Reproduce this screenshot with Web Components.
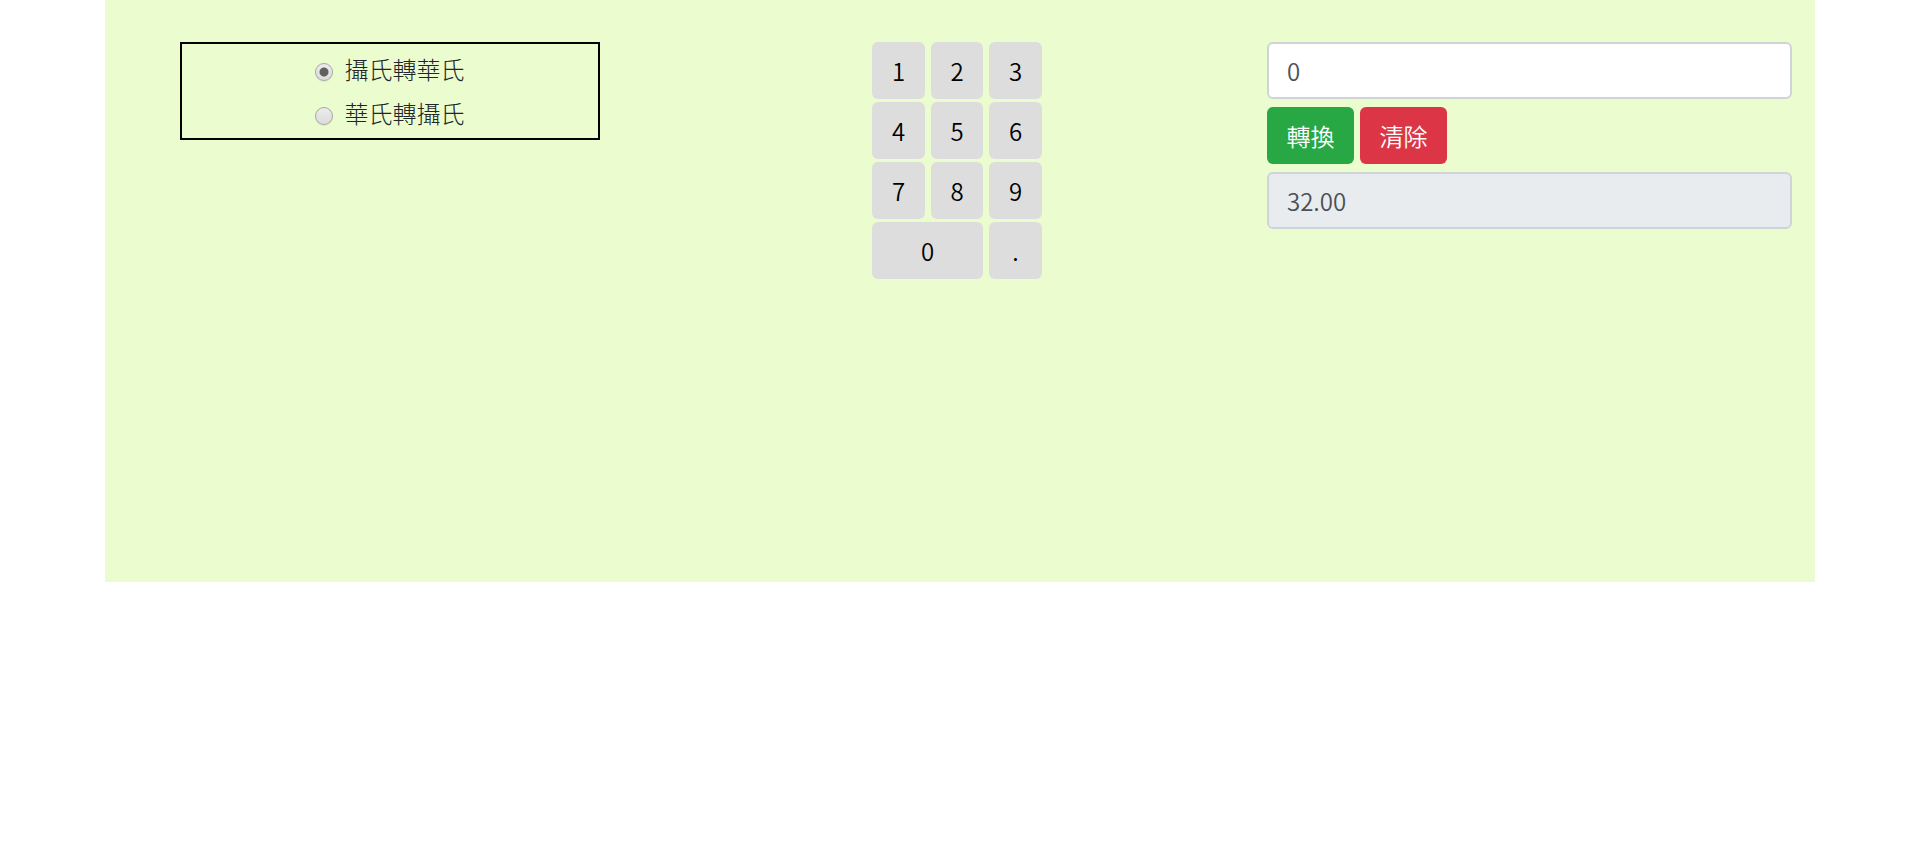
<!DOCTYPE html>
<html lang="zh-Hant">
<head>
<meta charset="utf-8">
<meta name="viewport" content="width=device-width, initial-scale=1">
<title>溫度轉換</title>
<style>
body {
  margin: 0;
  background: #fff;
  color: #212529;
  font-family: "Noto Sans CJK TC", "Noto Sans", sans-serif;
  font-size: 24px;
  font-weight: 300;
  line-height: 36px;
}
</style>
</head>
<body>
<temperature-converter></temperature-converter>

<script>
class ModePicker extends HTMLElement {
  constructor() {
    super();
    this.attachShadow({ mode: "open" }).innerHTML = `
      <style>
        :host { display: block; width: 80%; max-width: 420px; box-sizing: border-box; }
        fieldset {
          display: flex; flex-direction: column; align-items: center; gap: 8px;
          margin: 0; padding: 7px 0; border: 2px solid #000; min-width: 0;
        }
        label { display: flex; align-items: center; gap: 12px; }
        input {
          appearance: none; box-sizing: border-box; flex: none;
          width: 18px; height: 18px; margin: 6px 0 0;
          border: 1px solid #a8a8a8; border-radius: 50%;
          background: linear-gradient(#ececec, #dcdcdc);
          box-shadow: 0 1px 1px #00000014;
        }
        input:checked {
          background: radial-gradient(circle, #606060 0 4px, transparent 5px), linear-gradient(#ececec, #dcdcdc);
        }
      </style>
      <fieldset aria-label="轉換方向">
        <label><input type="radio" name="mode" value="cf" checked>攝氏轉華氏</label>
        <label><input type="radio" name="mode" value="fc">華氏轉攝氏</label>
      </fieldset>`;
  }
  get value() {
    return this.shadowRoot.querySelector("input:checked").value;
  }
}
customElements.define("mode-picker", ModePicker);

class NumberPad extends HTMLElement {
  constructor() {
    super();
    const keys = ["1", "2", "3", "4", "5", "6", "7", "8", "9", "0", "."];
    this.attachShadow({ mode: "open" }).innerHTML = `
      <style>
        :host { display: grid; grid-template-columns: 53px 52px 53px; gap: 3px 6px; }
        button {
          height: 57px; padding: 0; border: 0; border-radius: 6px;
          background: #ddd; color: #000; font: inherit; font-weight: 350; cursor: pointer;
        }
        button[value="0"] { grid-column: span 2; }
      </style>
      ${keys.map(k => `<button type="button" value="${k}">${k}</button>`).join("")}`;
    this.shadowRoot.addEventListener("click", e => {
      const key = e.target.closest("button");
      if (key) this.dispatchEvent(new CustomEvent("key", { detail: key.value }));
    });
  }
}
customElements.define("number-pad", NumberPad);

class TextField extends HTMLElement {
  constructor() {
    super();
    this.attachShadow({ mode: "open" }).innerHTML = `
      <style>
        :host { display: block; }
        input {
          display: block; box-sizing: border-box; width: 100%; height: 57px;
          margin: 0; padding: 9px 18px; border: 2px solid #ced4da; border-radius: 6px;
          background: #fff; color: #495057; font: inherit; font-weight: 350;
        }
        input:read-only { background: #e9ecef; }
      </style>
      <input type="text">`;
    this.input = this.shadowRoot.querySelector("input");
    this.input.value = this.getAttribute("value") || "";
    this.input.readOnly = this.hasAttribute("readonly");
    this.input.setAttribute("aria-label", this.getAttribute("label"));
  }
  get value() { return this.input.value; }
  set value(v) { this.input.value = v; }
}
customElements.define("text-field", TextField);

class ActionButton extends HTMLElement {
  constructor() {
    super();
    this.attachShadow({ mode: "open" }).innerHTML = `
      <style>
        :host { display: block; }
        button {
          min-width: 87px; height: 57px; padding: 0 18px; border: 0; border-radius: 6px;
          background: var(--tone); color: #fff; font: inherit; font-weight: 350; cursor: pointer;
        }
      </style>
      <button type="button"><slot></slot></button>`;
  }
}
customElements.define("action-button", ActionButton);

class TemperatureConverter extends HTMLElement {
  constructor() {
    super();
    this.attachShadow({ mode: "open" }).innerHTML = `
      <style>
        :host { display: block; }
        main {
          display: grid; grid-template-columns: repeat(3, 1fr);
          box-sizing: border-box; width: 100%; max-width: 1710px; min-height: 582px;
          margin: 0 auto; padding-top: 42px; background: #ebfccf;
        }
        section { padding: 0 23px 0 22px; min-width: 0; }
        .center { display: flex; justify-content: center; align-items: flex-start; }
        .keys { padding: 0 28px 0 22px; }
        .form { display: flex; flex-direction: column; gap: 8px; }
        .actions { display: flex; gap: 6px; }
        .convert { --tone: #28a745; }
        .clear { --tone: #dc3545; }
        @media (max-width: 800px) {
          main { grid-template-columns: 1fr; row-gap: 24px; padding-bottom: 24px; }
        }
      </style>
      <main>
        <section class="center"><mode-picker></mode-picker></section>
        <section class="center keys"><number-pad></number-pad></section>
        <section class="form">
          <text-field id="source" value="0" label="溫度"></text-field>
          <div class="actions">
            <action-button class="convert">轉換</action-button>
            <action-button class="clear">清除</action-button>
          </div>
          <text-field id="result" value="32.00" label="結果" readonly></text-field>
        </section>
      </main>`;
    const find = s => this.shadowRoot.querySelector(s);
    const source = find("#source"), result = find("#result");
    find("number-pad").addEventListener("key", e => { source.value += e.detail; });
    find(".convert").addEventListener("click", () => {
      const t = parseFloat(source.value);
      if (Number.isNaN(t)) return;
      const out = find("mode-picker").value === "cf" ? t * 9 / 5 + 32 : (t - 32) * 5 / 9;
      result.value = out.toFixed(2);
    });
    find(".clear").addEventListener("click", () => { source.value = ""; result.value = ""; });
  }
}
customElements.define("temperature-converter", TemperatureConverter);
</script>
</body>
</html>
